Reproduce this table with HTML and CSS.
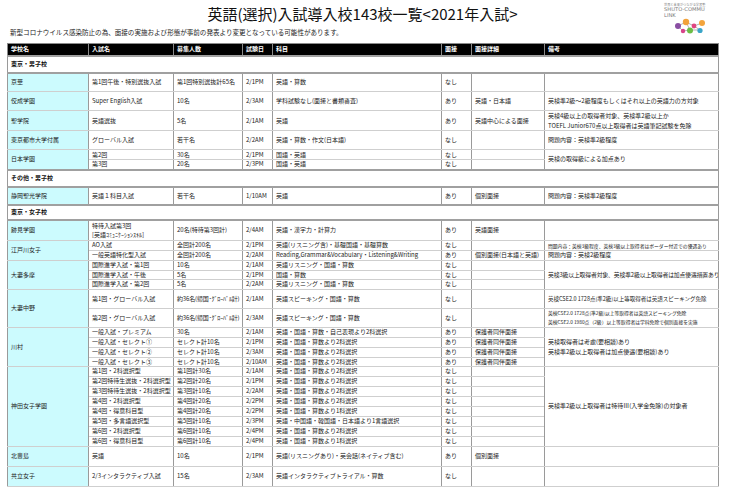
FILE: index.html
```html
<!DOCTYPE html>
<html lang="ja">
<head>
<meta charset="utf-8">
<title>英語(選択)入試導入校143校一覧</title>
<link rel="stylesheet" href="styles.css">
</head>
<body>
<div class="page">
  <header class="top">
    <div class="spacer"></div>
    <h1 class="title">英語(選択)入試導入校143校一覧&lt;2021年入試&gt;</h1>
    <div class="logo">
      <div class="logo-tag">世界と未来がつながる学習塾</div>
      <div class="logo-name">SHUTO-COMMU</div>
      <div class="logo-name">LINK</div>
      <svg class="logo-mark" viewBox="0 0 32 16" width="32" height="16" aria-hidden="true">
        <g stroke="#a0a0a0" stroke-width="0.8" fill="none">
          <path d="M4 8 L12 4 L20 8 L28 5"/>
          <path d="M12 4 L16 12 L26 12 L20 8"/>
          <path d="M4 8 L9 13 L16 12"/>
        </g>
        <circle cx="4" cy="8" r="3" fill="#8a4fa3"/>
        <circle cx="12" cy="4" r="3.2" fill="#f2a23a"/>
        <circle cx="20" cy="8" r="2.4" fill="#e0457f"/>
        <circle cx="28" cy="5" r="3" fill="#f3a43c"/>
        <circle cx="9" cy="13" r="2.2" fill="#d8438a"/>
        <circle cx="16" cy="12.5" r="3" fill="#6cbd45"/>
        <circle cx="26" cy="12.5" r="2.6" fill="#3aa5c8"/>
      </svg>
    </div>
  </header>
  <p class="note">新型コロナウイルス感染防止の為、面接の実施および形態が事前の発表より変更となっている可能性があります。</p>
  <table class="list">
    <colgroup>
      <col class="c-school"><col class="c-name"><col class="c-num"><col class="c-date">
      <col class="c-subj"><col class="c-int"><col class="c-intd"><col class="c-note">
    </colgroup>
    <thead>
      <tr><th>学校名</th><th>入試名</th><th>募集人数</th><th>試験日</th><th>科目</th><th>面接</th><th>面接詳細</th><th>備考</th></tr>
    </thead>
    <tbody>
      <tr class="sec s17"><td colspan="8">東京・男子校</td></tr>
      <tr class="h19"><td class="sch">京華</td><td>第1回午後・特別選抜入試</td><td>第1回特別選抜計65名</td><td>2/1PM</td><td>英語・算数</td><td>なし</td><td></td><td></td></tr>
      <tr class="h19"><td class="sch">佼成学園</td><td>Super English入試</td><td>10名</td><td>2/3AM</td><td>学科試験なし(面接と書類審査)</td><td>あり</td><td>英語・日本語</td><td>英検準2級～2級程度もしくはそれ以上の英語力の方対象</td></tr>
      <tr class="h19"><td class="sch">聖学院</td><td>英語選抜</td><td>5名</td><td>2/1AM</td><td>英語</td><td>あり</td><td>英語中心による面接</td><td class="two">英検4級以上の取得者対象、英検準2級以上か<br>TOEFL Junior670点以上取得者は英語筆記試験を免除</td></tr>
      <tr class="h19"><td class="sch">東京都市大学付属</td><td>グローバル入試</td><td>若干名</td><td>2/2AM</td><td>英語・算数・作文(日本語)</td><td>なし</td><td></td><td>問題内容：英検準2級程度</td></tr>
      <tr class="h10"><td class="sch" rowspan="2">日本学園</td><td>第2回</td><td>30名</td><td>2/1PM</td><td>国語・英語</td><td>なし</td><td></td><td rowspan="2">英検の取得級による加点あり</td></tr>
      <tr class="h10"><td>第3回</td><td>20名</td><td>2/3PM</td><td>国語・英語</td><td>なし</td><td></td></tr>
      <tr class="sec s17"><td colspan="8">その他・男子校</td></tr>
      <tr class="h18"><td class="sch">静岡聖光学院</td><td>英語１科目入試</td><td>若干名</td><td>1/10AM</td><td>英語</td><td>あり</td><td>個別面接</td><td>問題内容：英検準2級程度</td></tr>
      <tr class="sec s15"><td colspan="8">東京・女子校</td></tr>
      <tr class="h19"><td class="sch">跡見学園</td><td class="two">特待入試第3回<br>[英語ｺﾐｭﾆｹｰｼｮﾝｽｷﾙ]</td><td>20名(特待第3回計)</td><td>2/4AM</td><td>英語・漢字力・計算力</td><td>あり</td><td>英語面接</td><td></td></tr>
      <tr class="h10"><td class="sch" rowspan="2">江戸川女子</td><td>AO入試</td><td>全回計200名</td><td>2/1PM</td><td>英語(リスニング含)・基礎国語・基礎算数</td><td>なし</td><td></td><td class="tiny">問題内容：英検3級程度、英検3級以上取得者はボーダー付近での優遇あり</td></tr>
      <tr class="h10"><td>一般英語特化型入試</td><td>全回計200名</td><td>2/2AM</td><td>Reading,Grammar&amp;Vocabulary・Listening&amp;Writing</td><td>あり</td><td>個別面接(日本語と英語)</td><td>問題内容：英検2級程度</td></tr>
      <tr class="h10"><td class="sch" rowspan="3">大妻多摩</td><td>国際進学入試・第1回</td><td>10名</td><td>2/1AM</td><td>英語リスニング・国語・算数</td><td>なし</td><td></td><td class="fit-note" rowspan="3">英検3級以上取得者対象、英検準2級以上取得者は加点優遇措置あり</td></tr>
      <tr class="h9"><td>国際進学入試・午後</td><td>5名</td><td>2/1PM</td><td>国語・算数</td><td>なし</td><td></td></tr>
      <tr class="h10"><td>国際進学入試・第2回</td><td>5名</td><td>2/2AM</td><td>英語リスニング・国語・算数</td><td>なし</td><td></td></tr>
      <tr class="h19"><td class="sch" rowspan="2">大妻中野</td><td>第1回・グローバル入試</td><td class="fit">約36名(帰国･ｸﾞﾛｰﾊﾞﾙ計)</td><td>2/1AM</td><td>英語スピーキング・国語・算数</td><td>なし</td><td></td><td class="small">英検CSE2.0 1728点(準2級)以上等取得者は英語スピーキング免除</td></tr>
      <tr class="h19"><td>第2回・グローバル入試</td><td class="fit">約36名(帰国･ｸﾞﾛｰﾊﾞﾙ計)</td><td>2/3AM</td><td>英語スピーキング・国語・算数</td><td>なし</td><td></td><td class="tiny two-sm">英検CSE2.0 1728点(準2級)以上等取得者は英語スピーキング免除<br>英検CSE2.0 1980点（2級）以上等取得者は学科免除で個別面接を実施</td></tr>
      <tr class="h10"><td class="sch" rowspan="4">川村</td><td>一般入試・プレミアム</td><td>30名</td><td>2/1AM</td><td>英語・国語・算数・自己表現より2科選択</td><td>あり</td><td>保護者同伴面接</td><td class="two" rowspan="4">英検取得者は考慮(要相談)あり<br>英検準2級以上取得者は加点優遇(要相談)あり</td></tr>
      <tr class="h10"><td>一般入試・セレクト①</td><td>セレクト計10名</td><td>2/1PM</td><td>英語・国語・算数より2科選択</td><td>あり</td><td>保護者同伴面接</td></tr>
      <tr class="h10"><td>一般入試・セレクト②</td><td>セレクト計10名</td><td>2/3AM</td><td>英語・国語・算数より2科選択</td><td>あり</td><td>保護者同伴面接</td></tr>
      <tr class="h9"><td>一般入試・セレクト③</td><td>セレクト計10名</td><td>2/10AM</td><td>英語・国語・算数より2科選択</td><td>あり</td><td>保護者同伴面接</td></tr>
      <tr class="h10"><td class="sch" rowspan="8">神田女子学園</td><td>第1回・2科選択型</td><td>第1回計30名</td><td>2/1AM</td><td>英語・国語・算数より2科選択</td><td>なし</td><td></td><td rowspan="8">英検準2級以上取得者は特待Ⅲ(入学金免除)の対象者</td></tr>
      <tr class="h10"><td>第2回特待生選抜・2科選択型</td><td>第2回計20名</td><td>2/1PM</td><td>英語・国語・算数より2科選択</td><td>なし</td><td></td></tr>
      <tr class="h10"><td>第3回特待生選抜・2科選択型</td><td>第3回計10名</td><td>2/2AM</td><td>英語・国語・算数より2科選択</td><td>なし</td><td></td></tr>
      <tr class="h10"><td>第4回・2科選択型</td><td>第4回計20名</td><td>2/2PM</td><td>英語・国語・算数より2科選択</td><td>なし</td><td></td></tr>
      <tr class="h10"><td>第4回・得意科目型</td><td>第4回計20名</td><td>2/2PM</td><td>英語・国語・算数より1科選択</td><td>なし</td><td></td></tr>
      <tr class="h10"><td>第5回・多言語選択型</td><td>第5回計10名</td><td>2/3PM</td><td>英語・中国語・韓国語・日本語より1言語選択</td><td>なし</td><td></td></tr>
      <tr class="h10"><td>第6回・2科選択型</td><td>第6回計10名</td><td>2/4PM</td><td>英語・国語・算数より2科選択</td><td>なし</td><td></td></tr>
      <tr class="h10"><td>第6回・得意科目型</td><td>第6回計10名</td><td>2/4PM</td><td>英語・国語・算数より1科選択</td><td>なし</td><td></td></tr>
      <tr class="h20"><td class="sch">北豊島</td><td>英語</td><td>10名</td><td>2/1PM</td><td>英語(リスニングあり)・英会話(ネイティブ含む)</td><td>あり</td><td>個別面接</td><td></td></tr>
      <tr class="h20"><td class="sch">共立女子</td><td>2/3インタラクティブ入試</td><td>15名</td><td>2/3AM</td><td>英語インタラクティブトライアル・算数</td><td>なし</td><td></td><td></td></tr>
    </tbody>
  </table>
</div>
</body>
</html>
```

FILE: styles.css
```css
* { box-sizing: border-box; }

body {
  margin: 0;
  background: #ffffff;
  color: #222222;
  font-family: "Noto Sans CJK JP", "Noto Sans", sans-serif;
}

.page {
  width: 718px;
  padding-left: 7px;
}

.top {
  display: grid;
  grid-template-columns: 1fr auto 1fr;
  height: 27px;
}

.title {
  margin: 0;
  font-size: 15px;
  font-weight: 400;
  line-height: 27px;
  color: #111111;
  white-space: nowrap;
}

.logo {
  justify-self: end;
  margin-right: 10px;
  padding-top: 3px;
  width: 44px;
  height: 27px;
  line-height: 1;
  color: #7a7a7a;
}

.logo-tag {
  font-size: 3.2px;
  line-height: 4px;
  white-space: nowrap;
  color: #8a8a8a;
}

.logo-name {
  font-family: "DejaVu Sans", sans-serif;
  font-size: 5.2px;
  line-height: 5.5px;
  white-space: nowrap;
}

.logo-mark {
  display: block;
  margin: 0 0 0 10px;
}

.note {
  margin: 0 0 6px;
  padding-left: 3px;
  height: 10px;
  font-size: 6.55px;
  line-height: 10px;
  white-space: nowrap;
  color: #222222;
}

.list {
  width: 711px;
  table-layout: fixed;
  border-collapse: collapse;
  font-size: 6px;
  line-height: 8px;
}

.c-school { width: 81px; }
.c-name { width: 85px; }
.c-num { width: 69px; }
.c-date { width: 30px; }
.c-subj { width: 169px; }
.c-int { width: 30px; }
.c-intd { width: 73px; }
.c-note { width: 174px; }

.list th {
  height: 12px;
  padding: 0 3px;
  background: #000000;
  color: #ffffff;
  font-weight: 700;
  text-align: left;
  border: 1px solid #8a8a8a;
}

.list td {
  padding: 0 3px;
  border: 1px solid #cfcfcf;
  border-left-color: #9a9a9a;
  border-right-color: #9a9a9a;
  white-space: nowrap;
  overflow: hidden;
  vertical-align: middle;
}

.list .sch {
  background: #ccfbfe;
}

.list .sec td {
  font-weight: 700;
  color: #111111;
  border-top: 2px solid #a0a0a0;
  border-bottom: 2px solid #a0a0a0;
}

.s15 { height: 15px; }
.s17 { height: 17px; }
.h9 { height: 9px; }
.h10 { height: 10px; }
.h18 { height: 18px; }
.h19 { height: 19px; }
.h20 { height: 20px; }

.list .two { line-height: 9.5px; }

.list .small { font-size: 5.5px; }

.list .fit { letter-spacing: -0.15px; padding-right: 0; }

.list .fit-note {
  font-size: 5.8px;
  letter-spacing: -0.1px;
  padding-right: 0;
}

.list .tiny {
  font-size: 4.8px;
  line-height: 7px;
}

.list .two-sm { line-height: 8.5px; }
```
